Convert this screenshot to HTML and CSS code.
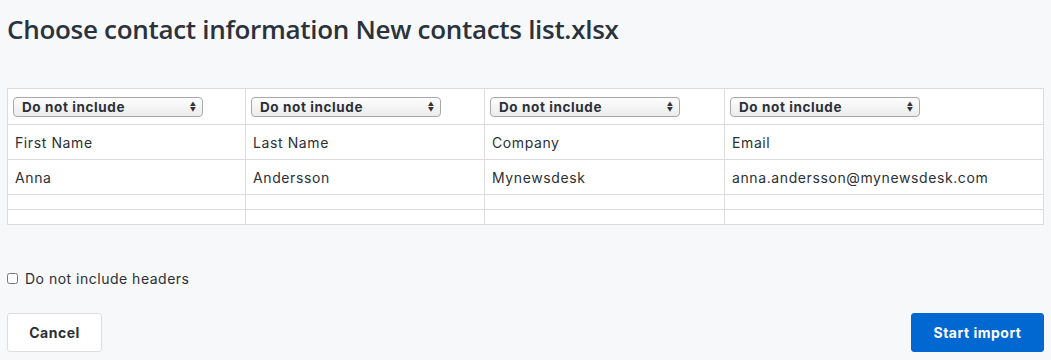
FILE: index.html
```html
<!DOCTYPE html>
<html lang="en">
<head>
    <meta charset="UTF-8">
    <title>Choose contact information</title>
    <link rel="stylesheet" href="styles.css">
</head>
<body>
    <div class="page">
        <h1>Choose contact information New contacts list.xlsx</h1>

        <table class="mapping">
            <colgroup>
                <col class="col-1">
                <col class="col-2">
                <col class="col-3">
                <col>
            </colgroup>
            <tr class="select-row">
                <td><div class="fake-select">Do not include<span class="arrows">&#9650;<br>&#9660;</span></div></td>
                <td><div class="fake-select">Do not include<span class="arrows">&#9650;<br>&#9660;</span></div></td>
                <td><div class="fake-select">Do not include<span class="arrows">&#9650;<br>&#9660;</span></div></td>
                <td><div class="fake-select">Do not include<span class="arrows">&#9650;<br>&#9660;</span></div></td>
            </tr>
            <tr class="data-row">
                <td>First Name</td>
                <td>Last Name</td>
                <td>Company</td>
                <td>Email</td>
            </tr>
            <tr class="data-row">
                <td>Anna</td>
                <td>Andersson</td>
                <td>Mynewsdesk</td>
                <td>anna.andersson@mynewsdesk.com</td>
            </tr>
            <tr class="empty-row"><td></td><td></td><td></td><td></td></tr>
            <tr class="empty-row"><td></td><td></td><td></td><td></td></tr>
        </table>

        <label class="check">
            <input type="checkbox">
            <span>Do not include headers</span>
        </label>

        <div class="actions">
            <button class="btn">Cancel</button>
            <button class="btn primary">Start import</button>
        </div>
    </div>
</body>
</html>
```

FILE: styles.css
```css
body {
    margin: 0;
    background-color: #f7f8fa;
    font-family: Inter, "Noto Sans", sans-serif;
    color: #2b3038;
}
.page {
    padding: 0 7px;
}
h1 {
    font-family: "Open Sans", sans-serif;
    font-weight: 600;
    font-size: 26px;
    letter-spacing: -0.3px;
    color: #2a323d;
    margin: 0;
    padding-top: 11px;
    height: 77px;
}
.mapping {
    width: 100%;
    border-collapse: collapse;
    background-color: #fff;
    table-layout: fixed;
}
.mapping .col-1 { width: 238px; }
.mapping .col-2 { width: 239px; }
.mapping .col-3 { width: 240px; }
.mapping td {
    border: 1px solid #dcdcdc;
    padding: 0 7px;
    font-size: 14px;
    letter-spacing: 0.6px;
}
.select-row td {
    height: 35px;
}
.data-row td {
    height: 34px;
}
.empty-row td {
    height: 14px;
}
.fake-select {
    position: relative;
    width: 180px;
    height: 18px;
    margin-left: -2px;
    line-height: 18px;
    border: 1px solid #a8a8a8;
    border-radius: 4px;
    background: linear-gradient(#fdfdfd, #ececec);
    font-weight: 700;
    font-size: 13.5px;
    letter-spacing: 0.6px;
    padding-left: 8px;
}
.arrows {
    position: absolute;
    right: 6px;
    top: 3px;
    font-size: 6px;
    line-height: 6px;
    letter-spacing: 0;
    color: #333;
    text-align: center;
}
.check {
    display: flex;
    align-items: center;
    gap: 7px;
    margin-top: 45px;
    font-size: 14px;
    letter-spacing: 0.5px;
}
.check input {
    margin: 0;
    width: 11px;
    height: 11px;
}
.actions {
    display: flex;
    justify-content: space-between;
    margin-top: 26px;
}
.btn {
    font-family: Inter, sans-serif;
    font-weight: 700;
    font-size: 14px;
    letter-spacing: 0.5px;
    height: 39px;
    padding: 0 10px;
    border: 1px solid #dcdee2;
    border-radius: 3px;
    background-color: #fff;
    color: #2b3038;
    width: 95px;
}
.btn.primary {
    background-color: #0068d0;
    border-color: #0068d0;
    color: #fff;
    width: 133px;
}
```
